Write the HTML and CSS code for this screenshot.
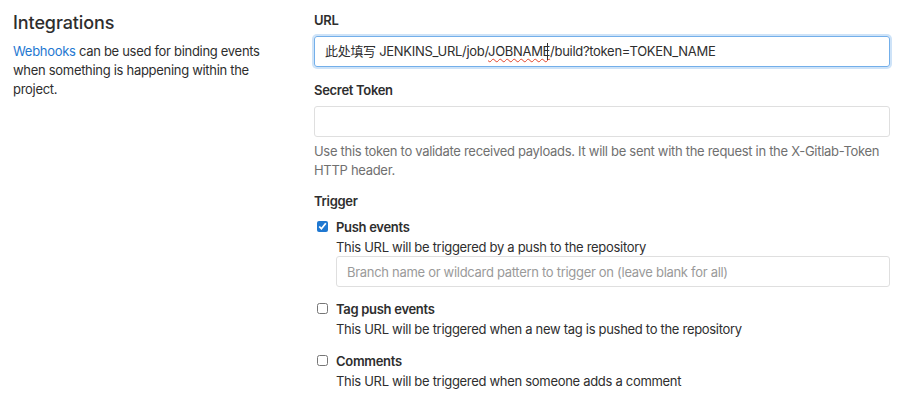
FILE: index.html
```html
<!DOCTYPE html>
<html lang="en">

<head>
  <meta charset="UTF-8">
  <meta name="viewport" content="width=device-width, initial-scale=1.0">
  <title>Integrations</title>
  <link rel="stylesheet" href="styles.css">
</head>

<body>
  <div class="page">
    <div class="side">
      <h4>Integrations</h4>
      <p><a href="#">Webhooks</a> can be used for binding events when something is happening within the project.</p>
    </div>

    <form class="main">
      <div class="group">
        <label class="label">URL</label>
        <div class="field focused">此处填写 JENKINS_URL/job/<span class="typo">JOBNAME</span><span class="caret"></span>/build?token=TOKEN_NAME</div>
      </div>

      <div class="group token">
        <label class="label" for="token">Secret Token</label>
        <input class="field" type="text" id="token">
        <p class="help">Use this token to validate received payloads. It will be sent with the request in the X-Gitlab-Token HTTP header.</p>
      </div>

      <div class="group trigger">
        <label class="label">Trigger</label>

        <div class="check">
          <input type="checkbox" id="push" checked>
          <div>
            <label class="check-title" for="push">Push events</label>
            <p class="check-desc">This URL will be triggered by a push to the repository</p>
            <input class="field branch" type="text" placeholder="Branch name or wildcard pattern to trigger on (leave blank for all)">
          </div>
        </div>

        <div class="check">
          <input type="checkbox" id="tag">
          <div>
            <label class="check-title" for="tag">Tag push events</label>
            <p class="check-desc">This URL will be triggered when a new tag is pushed to the repository</p>
          </div>
        </div>

        <div class="check">
          <input type="checkbox" id="comments">
          <div>
            <label class="check-title" for="comments">Comments</label>
            <p class="check-desc">This URL will be triggered when someone adds a comment</p>
          </div>
        </div>
      </div>
    </form>
  </div>
</body>
</html>
```
FILE: styles.css
```css
body {
  margin: 0;
  background-color: #fff;
  color: #2e2e2e;
  font-family: Inter, "Noto Sans CJK SC", sans-serif;
  font-size: 13px;
  letter-spacing: -0.3px;
}
.page {
  display: flex;
  padding: 11px 20px 0 13px;
}
.side {
  width: 280px;
  flex-shrink: 0;
}
.side h4 {
  margin: 0;
  font-size: 18px;
  font-weight: 500;
  line-height: 24px;
  letter-spacing: -0.1px;
}
.side p {
  margin: 7px 0 0;
  line-height: 19px;
  width: 260px;
}
.side a {
  color: #1f78d1;
  text-decoration: none;
}
.main {
  margin-left: 21px;
  flex: 1;
}
.group {
  margin-bottom: 14px;
}
.group.token {
  margin-bottom: 12px;
}
.label {
  display: block;
  font-weight: 600;
  line-height: 18px;
  margin-bottom: 7px;
}
.field {
  box-sizing: border-box;
  display: block;
  width: 100%;
  height: 31px;
  padding: 0 10px;
  border: 1px solid #dfdfdf;
  border-radius: 3px;
  font-family: inherit;
  font-size: 13px;
  letter-spacing: -0.3px;
  color: #2e2e2e;
  line-height: 29px;
  outline: none;
}
.field.focused {
  border-color: #73afea;
  box-shadow: 0 0 0 2px rgba(115, 175, 234, 0.35);
  white-space: nowrap;
}
.typo {
  text-decoration: underline wavy #e24329;
  text-decoration-thickness: 1px;
  text-underline-offset: 2px;
}
.caret {
  display: inline-block;
  width: 1px;
  height: 17px;
  margin-left: -3px;
  margin-right: 2px;
  background-color: #2e2e2e;
  vertical-align: -4px;
}
.help {
  margin: 5px 0 0;
  color: #707070;
  line-height: 19px;
}
.trigger .label {
  margin-bottom: 8px;
}
.check {
  display: flex;
  gap: 8px;
  margin-left: 3px;
  margin-bottom: 14px;
}
.check input[type="checkbox"] {
  margin: 3px 0 0;
  width: 11px;
  height: 11px;
  accent-color: #1f78d1;
}
.check-title {
  display: block;
  font-weight: 600;
  line-height: 18px;
}
.check-desc {
  margin: 2px 0 0;
  line-height: 18px;
}
.field.branch {
  width: 554px;
  margin-bottom: -1px;
}
.field.branch::placeholder {
  color: #9a9a9a;
}
```
